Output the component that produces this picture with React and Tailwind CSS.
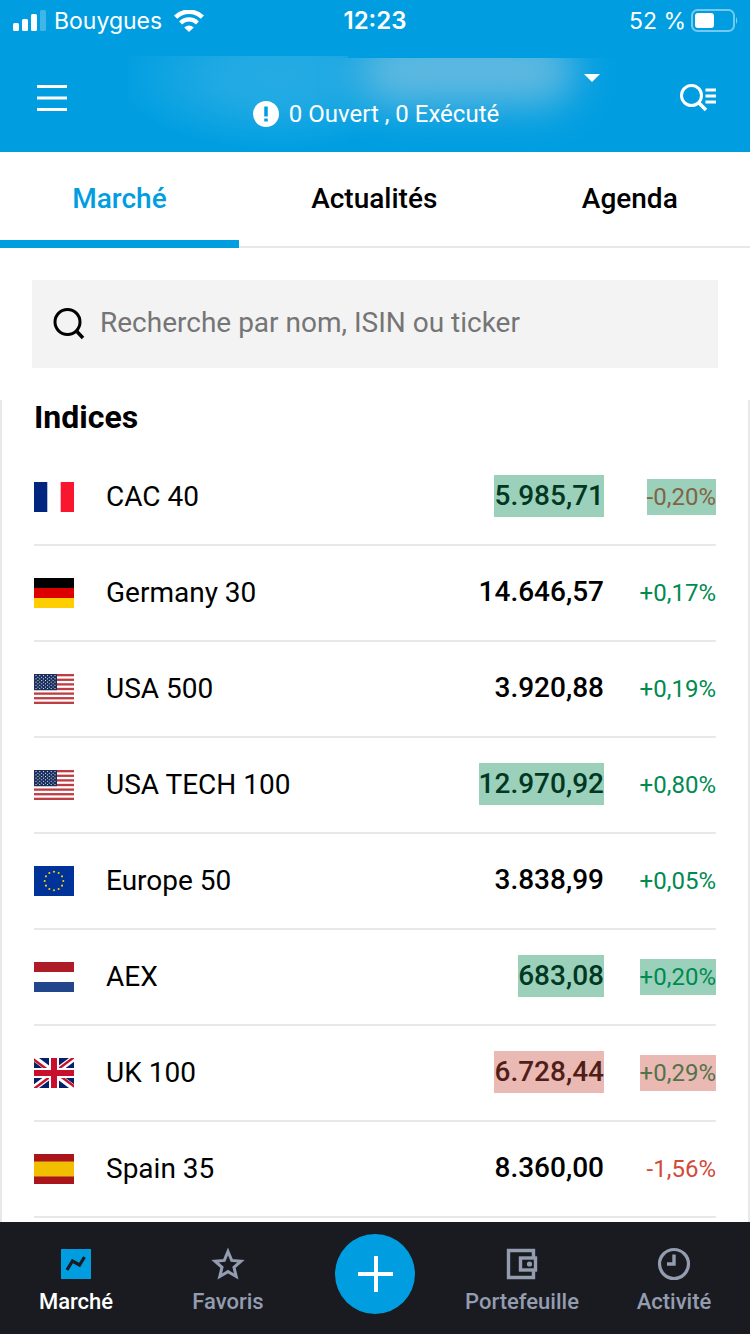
import React from "react";

function FlagFrame({ label, children }) {
  return (
    <svg role="img" aria-label={label} viewBox="0 0 40 30" className="block h-[30px] w-10">
      {children}
    </svg>
  );
}

function France() {
  return (
    <FlagFrame label="France">
      <rect width="40" height="30" fill="#fff" />
      <rect width="13.3" height="30" fill="#00267f" />
      <rect x="26.7" width="13.3" height="30" fill="#f8172e" />
    </FlagFrame>
  );
}

function Germany() {
  return (
    <FlagFrame label="Allemagne">
      <rect width="40" height="10" fill="#000" />
      <rect y="10" width="40" height="10" fill="#d00" />
      <rect y="20" width="40" height="10" fill="#ffce00" />
    </FlagFrame>
  );
}

function UnitedStates() {
  const stripes = [0, 2, 4, 6, 8, 10, 12];
  const rows = [0, 1, 2, 3, 4, 5, 6, 7, 8];
  return (
    <FlagFrame label="États-Unis">
      <rect width="40" height="30" fill="#fff" />
      {stripes.map((i) => (
        <rect key={i} y={(i * 30) / 13} width="40" height={30 / 13} fill="#bd3d44" />
      ))}
      <rect width="23" height={(7 * 30) / 13} fill="#192f5d" />
      {rows.map((r) =>
        Array.from({ length: r % 2 ? 5 : 6 }, (_, c) => (
          <circle
            key={`${r}-${c}`}
            cx={2 + c * 3.8 + (r % 2 ? 1.9 : 0)}
            cy={1.6 + r * 1.62}
            r="0.55"
            fill="#fff"
          />
        ))
      )}
    </FlagFrame>
  );
}

function Europe() {
  return (
    <FlagFrame label="Europe">
      <rect width="40" height="30" fill="#039" />
      {Array.from({ length: 12 }, (_, i) => {
        const a = (i * Math.PI) / 6;
        return (
          <circle key={i} cx={20 + 9.3 * Math.sin(a)} cy={15 - 9.3 * Math.cos(a)} r="1.05" fill="#fc0" />
        );
      })}
    </FlagFrame>
  );
}

function Netherlands() {
  return (
    <FlagFrame label="Pays-Bas">
      <rect width="40" height="30" fill="#fff" />
      <rect width="40" height="10" fill="#ae1c28" />
      <rect y="20" width="40" height="10" fill="#21468b" />
    </FlagFrame>
  );
}

function UnitedKingdom() {
  return (
    <FlagFrame label="Royaume-Uni">
      <rect width="40" height="30" fill="#012169" />
      <path d="M0 0L40 30M40 0L0 30" stroke="#fff" strokeWidth="6" />
      <path
        d="M-1 1L20 16.5M21 13.5L41 -1.5M41 29L20 13.5M19 16.5L-1 31.5"
        stroke="#c8102e"
        strokeWidth="2.4"
      />
      <path d="M20 0V30M0 15H40" stroke="#fff" strokeWidth="10" />
      <path d="M20 0V30M0 15H40" stroke="#c8102e" strokeWidth="6" />
    </FlagFrame>
  );
}

function Spain() {
  return (
    <FlagFrame label="Espagne">
      <rect width="40" height="30" fill="#aa151b" />
      <rect y="7" width="40" height="16" fill="#c8681a" />
      <rect y="8" width="40" height="14" fill="#f1bf00" />
    </FlagFrame>
  );
}

const quotes = [
  {
    Flag: France, name: "CAC 40", price: "5.985,71", change: "-0,20%",
    priceStyle: "bg-[#9bd1bb] text-[#023822]", changeStyle: "bg-[#9bd1bb] text-[#816446]",
  },
  {
    Flag: Germany, name: "Germany 30", price: "14.646,57", change: "+0,17%",
    priceStyle: "text-black", changeStyle: "text-[#008a52]",
  },
  {
    Flag: UnitedStates, name: "USA 500", price: "3.920,88", change: "+0,19%",
    priceStyle: "text-black", changeStyle: "text-[#008a52]",
  },
  {
    Flag: UnitedStates, name: "USA TECH 100", price: "12.970,92", change: "+0,80%",
    priceStyle: "bg-[#9bd1bb] text-[#023822]", changeStyle: "text-[#008a52]",
  },
  {
    Flag: Europe, name: "Europe 50", price: "3.838,99", change: "+0,05%",
    priceStyle: "text-black", changeStyle: "text-[#008a52]",
  },
  {
    Flag: Netherlands, name: "AEX", price: "683,08", change: "+0,20%",
    priceStyle: "bg-[#9bd1bb] text-[#023822]", changeStyle: "bg-[#9bd1bb] text-[#008a52]",
  },
  {
    Flag: UnitedKingdom, name: "UK 100", price: "6.728,44", change: "+0,29%",
    priceStyle: "bg-[#ebb9b3] text-[#501e19]", changeStyle: "bg-[#ebb9b3] text-[#52734b]",
  },
  {
    Flag: Spain, name: "Spain 35", price: "8.360,00", change: "-1,56%",
    priceStyle: "text-black", changeStyle: "text-[#d14a3a]",
  },
];

function StatusBar() {
  return (
    <div className="relative grid h-10 grid-cols-3 items-center px-3 font-['Inter',sans-serif] text-[23px] leading-[42px] text-white">
      <div className="flex items-center gap-2">
        <svg viewBox="0 0 34 22" className="h-[22px] w-[34px]" fill="#fff" aria-hidden="true">
          <rect x="1" y="13" width="6" height="8" rx="1.5" />
          <rect x="10" y="9" width="6" height="12" rx="1.5" />
          <rect x="19" y="4" width="6" height="17" rx="1.5" />
          <rect x="28" y="0" width="6" height="21" rx="1.5" opacity="0.25" />
        </svg>
        <span>Bouygues</span>
        <svg viewBox="0 0 30 22" className="ml-1 h-[22px] w-[30px]" fill="none" aria-hidden="true">
          <path d="M1.600 7.200A19.200 19.200 0 0 1 28.400 7.200" stroke="#fff" strokeWidth="4.600" />
          <path d="M6.600 12.900A12 12 0 0 1 23.400 12.900" stroke="#fff" strokeWidth="4.200" />
          <path d="M15 22L10.200 17.500Q15 13.600 19.800 17.500Z" fill="#fff" />
        </svg>
      </div>
      <span className="text-center text-[24px] font-semibold">12:23</span>
      <div className="flex items-center justify-end gap-1">
        <span>52 %</span>
        <svg viewBox="0 0 48 24" className="h-6 w-12" fill="none" aria-hidden="true">
          <rect x="2" y="1" width="42" height="21" rx="5.5" stroke="#fff" strokeOpacity="0.45" strokeWidth="2" />
          <rect x="5" y="4" width="19" height="15" rx="3" fill="#fff" />
          <path d="M46 8Q48.500 11.500 46 15Z" fill="#fff" fillOpacity="0.5" />
        </svg>
      </div>
    </div>
  );
}

function Header() {
  return (
    <header className="relative bg-[#009ee1]">
      <div
        aria-hidden="true"
        className="absolute top-14 right-[402px] left-32 h-24 bg-[radial-gradient(ellipse_160px_72px_at_68%_22%,#26abe4_0%,#1fa9e3_40%,#009ee100_100%)]"
      />
      <div
        aria-hidden="true"
        className="absolute top-[58px] right-32 left-[348px] h-[94px] bg-[radial-gradient(ellipse_160px_72px_at_-26%_20%,#26abe4_0%,#1fa9e3_40%,#009ee100_100%)]"
      />
      <div aria-hidden="true" className="absolute top-[58px] right-28 left-72 h-[94px] overflow-hidden">
        <div className="-mt-6 ml-[72px] h-[72px] w-[216px] rounded-full bg-[#60b9e0] blur-[20px]" />
      </div>
      <StatusBar />
      <div className="relative grid h-28 grid-cols-[1fr_3fr_1fr] text-white">
        <button type="button" aria-label="Menu" className="flex items-center pt-1 pl-9">
          <svg viewBox="0 0 32 28" className="h-7 w-8" aria-hidden="true">
            <path d="M1 2.500H31M1 14H31M1 25.500H31" stroke="#fff" strokeWidth="3" />
          </svg>
        </button>
        <div className="flex flex-col pt-5">
          <button type="button" aria-label="Changer de compte" className="flex h-9 items-center justify-end">
            <svg viewBox="0 0 16 8" className="h-2 w-4" aria-hidden="true">
              <path d="M0 0H16L8 8Z" fill="#fff" />
            </svg>
          </button>
          <p className="flex items-center justify-center gap-2.5 pl-0.5 text-[24px] leading-9">
            <svg viewBox="0 0 26 26" className="size-[26px]" aria-hidden="true">
              <circle cx="13" cy="13" r="13" fill="#fff" />
              <path d="M13 5.500V15.500M13 17.500V20.500" stroke="#009ee1" strokeWidth="3.500" />
            </svg>
            0 Ouvert , 0 Exécuté
          </p>
        </div>
        <button type="button" aria-label="Recherche avancée" className="flex items-center justify-end pt-1 pr-[34px]">
          <svg viewBox="0 0 36 28" className="h-7 w-9" fill="none" stroke="#fff" aria-hidden="true">
            <circle cx="11.500" cy="11.500" r="10" strokeWidth="3" />
            <path d="M18.500 18.500L26 26" strokeWidth="3.500" />
            <path d="M25.500 6H36M25.500 12H36M25.500 18H36" strokeWidth="3.200" />
          </svg>
        </button>
      </div>
    </header>
  );
}

function Tabs() {
  return (
    <div role="tablist" className="flex text-[28px] leading-[42px] font-medium">
      <button
        type="button" role="tab" aria-selected="true"
        className="h-24 flex-auto border-b-8 border-[#009ee1] pt-1.5 text-[#009ee1]"
      >
        Marché
      </button>
      <button
        type="button" role="tab" aria-selected="false"
        className="h-24 flex-auto border-b-2 border-[#e8e8e8] text-black"
      >
        Actualités
      </button>
      <button
        type="button" role="tab" aria-selected="false"
        className="h-24 flex-auto border-b-2 border-[#e8e8e8] text-black"
      >
        Agenda
      </button>
    </div>
  );
}

function SearchBox() {
  return (
    <div className="m-8 flex h-[88px] items-center gap-3.5 bg-[#f3f3f3] px-5">
      <label htmlFor="search">
        <svg
          role="img" aria-label="Recherche" viewBox="0 0 34 34"
          className="size-[34px]" fill="none" stroke="#000"
        >
          <circle cx="15.500" cy="15" r="12.500" strokeWidth="3" />
          <path d="M24 23.500L31 31" strokeWidth="3.500" />
        </svg>
      </label>
      <input
        id="search"
        type="search"
        placeholder="Recherche par nom, ISIN ou ticker"
        className="min-w-0 flex-1 bg-transparent pb-0.5 text-[28px] leading-[42px] outline-none placeholder:text-[#757575]"
      />
    </div>
  );
}

function Quotes() {
  return (
    <section className="flex-1 border-x-2 border-[#e8e8e8] px-8 pb-1">
      <h2 className="h-[50px] text-[32px] leading-[34px] font-bold">Indices</h2>
      <table className="w-full border-separate border-spacing-0">
        <tbody>
          {quotes.map(({ Flag, name, price, change, priceStyle, changeStyle }) => (
            <tr key={name}>
              <td className="h-24 w-[72px] border-b-2 border-[#e8e8e8]">
                <Flag />
              </td>
              <th scope="row" className="border-b-2 border-[#e8e8e8] text-left text-[28px] leading-[42px] font-normal">
                {name}
              </th>
              <td className="border-b-2 border-[#e8e8e8] pb-0.5 text-right text-[28px] leading-[42px] font-medium">
                <span className={`inline-block ${priceStyle}`}>{price}</span>
              </td>
              <td className="w-28 border-b-2 border-[#e8e8e8] text-right text-[24px] leading-9">
                <span className={`inline-block ${changeStyle}`}>{change}</span>
              </td>
            </tr>
          ))}
        </tbody>
      </table>
    </section>
  );
}

function NavItem({ label, active, children }) {
  return (
    <a
      href="#"
      aria-current={active ? "page" : undefined}
      className={`flex flex-1 flex-col items-center gap-1 pt-6 text-[22px] leading-8 font-medium ${
        active ? "text-white" : "text-[#949cb0]"
      }`}
    >
      <svg viewBox="0 0 36 36" className="size-9" fill="none" aria-hidden="true">
        {children}
      </svg>
      {label}
    </a>
  );
}

function BottomNav() {
  return (
    <nav className="sticky bottom-0 flex h-28 bg-[#1a1b20]">
      <NavItem label="Marché" active>
        <rect x="3" y="3" width="30" height="30" fill="#009ee1" />
        <path d="M9 24L14.500 15L21.500 19L26.500 11" stroke="#1a1b20" strokeWidth="3.200" />
      </NavItem>
      <NavItem label="Favoris">
        <path
          d="M18 5.500L21.700 14.400L31 15.200L24 21.300L26.200 30.500L18 25.600L9.800 30.500L12 21.300L5 15.200L14.300 14.400Z"
          stroke="#949cb0"
          strokeWidth="3"
        />
      </NavItem>
      <div className="flex w-[142px] items-center justify-center pb-2">
        <button
          type="button"
          aria-label="Nouvel ordre"
          className="flex size-20 items-center justify-center rounded-full bg-[#009ee1]"
        >
          <svg viewBox="0 0 36 36" className="size-9" aria-hidden="true">
            <path d="M19 0V36M1 18H36" stroke="#fff" strokeWidth="4" />
          </svg>
        </button>
      </div>
      <NavItem label="Portefeuille">
        <g stroke="#949cb0" strokeWidth="3.400">
          <path d="M29.500 11V4.500H4.500V31.500H29.500V25" />
          <rect x="16.500" y="12" width="15" height="12" />
        </g>
        <circle cx="25.500" cy="18" r="2.600" fill="#949cb0" />
      </NavItem>
      <NavItem label="Activité">
        <circle cx="18" cy="18" r="14.500" stroke="#949cb0" strokeWidth="3.200" />
        <path d="M18 8.500V18H11" stroke="#949cb0" strokeWidth="3.400" />
      </NavItem>
    </nav>
  );
}

export default function App() {
  return (
    <div className="flex min-h-screen flex-col bg-white font-['Roboto',sans-serif] text-black">
      <Header />
      <main className="flex flex-1 flex-col">
        <Tabs />
        <SearchBox />
        <Quotes />
      </main>
      <BottomNav />
    </div>
  );
}
